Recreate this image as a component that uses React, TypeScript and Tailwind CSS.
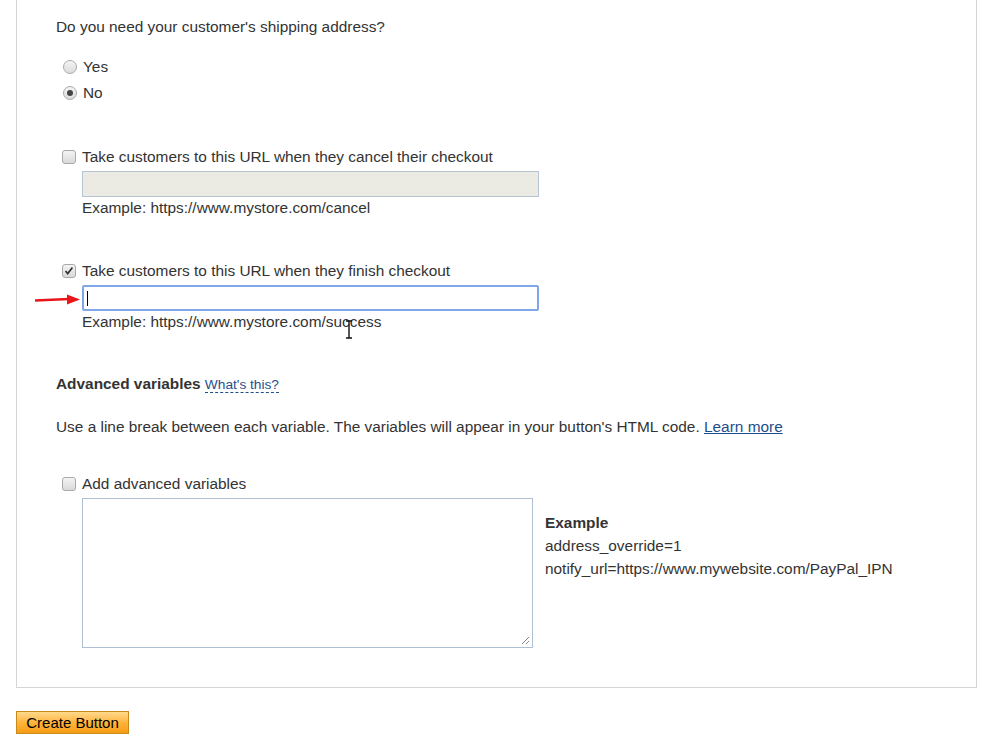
const font = { fontFamily: '"Liberation Sans", Arial, sans-serif' };

const Check = ({ checked }: { checked?: boolean }) => (
  <span className="relative inline-block w-[14px] h-[14px] rounded-[3px] border border-[#a9a9a9] bg-gradient-to-b from-[#f4f4f4] to-[#d9d9d9] mr-[6px] shrink-0">
    {checked && (
      <svg viewBox="0 0 14 14" className="absolute inset-0 w-[12px] h-[12px]">
        <path d="M3 7 L5.5 10 L11 3" fill="none" stroke="#333" strokeWidth="2" />
      </svg>
    )}
  </span>
);

const Radio = ({ checked }: { checked?: boolean }) => (
  <span className="relative inline-flex items-center justify-center w-[14px] h-[14px] rounded-full border border-[#a9a9a9] bg-gradient-to-b from-[#f4f4f4] to-[#dcdcdc] mr-[6px] shrink-0">
    {checked && <span className="w-[6px] h-[6px] rounded-full bg-[#444]" />}
  </span>
);

const Row = ({ children, className = '' }: { children: React.ReactNode; className?: string }) => (
  <div className={`flex items-center h-[20px] ${className}`}>{children}</div>
);

export default function App() {
  return (
    <div className="min-h-screen bg-white text-[15.4px] text-[#333] pl-4" style={font}>
      <div className="w-[961px] border-l border-r border-b border-[#d4d4d4] pl-[39px] pt-[17px] pb-[39px]">
        <div className="h-[20px] leading-[20px]">Do you need your customer's shipping address?</div>

        <Row className="mt-[20px] pl-[7px]"><Radio />Yes</Row>
        <Row className="mt-[6px] pl-[7px]"><Radio checked />No</Row>

        <Row className="mt-[44px] pl-[6px]"><Check />Take customers to this URL when they cancel their checkout</Row>
        <div className="ml-[26px] mt-[4px] w-[457px] h-[26px] border border-[#b5c4d6] bg-[#ebebe4]" />
        <div className="ml-[26px] mt-[1px] h-[20px] leading-[20px]">Example: https://www.mystore.com/cancel</div>

        <Row className="mt-[43px] pl-[6px]"><Check checked />Take customers to this URL when they finish checkout</Row>
        <div className="relative">
          <div className="ml-[26px] mt-[4px] w-[457px] h-[26px] border-2 border-[#7fa6e6] rounded-[2px] bg-white flex items-center pl-[3px]">
            <span className="w-[1px] h-[15px] bg-black" />
          </div>
          <svg className="absolute left-[-21px] top-[9px]" width="46" height="12" viewBox="0 0 46 12">
            <path d="M0 6.5 L34 5" stroke="#e8161b" strokeWidth="2.5" fill="none" />
            <path d="M32 0.5 L45 5.5 L32 10.5 Z" fill="#e8161b" />
          </svg>
        </div>
        <div className="relative ml-[26px] mt-[1px] h-[20px] leading-[20px]">
          Example: https://www.mystore.com/success
          <svg className="absolute left-[263px] top-[8px]" width="8" height="19" viewBox="0 0 8 19">
            <path d="M1 1 H7 M4 1 V18 M1 18 H7" stroke="#111" strokeWidth="1.4" fill="none" />
          </svg>
        </div>

        <div className="mt-[42px] h-[20px] leading-[20px]">
          <span className="font-bold">Advanced variables</span>{' '}
          <span className="text-[13.7px] text-[#1f4e8c] border-b border-dashed border-[#1f4e8c]">What's this?</span>
        </div>

        <div className="mt-[23px] h-[20px] leading-[20px]">
          Use a line break between each variable. The variables will appear in your button's HTML code.{' '}
          <span className="text-[#1f4e8c] underline">Learn more</span>
        </div>

        <Row className="mt-[37px] pl-[6px]"><Check />Add advanced variables</Row>
        <div className="flex mt-[4px] ml-[26px]">
          <div className="relative w-[451px] h-[150px] border border-[#aebfd3] bg-white">
            <svg className="absolute right-[2px] bottom-[2px]" width="9" height="9" viewBox="0 0 9 9">
              <path d="M8 1 L1 8 M8 5 L5 8" stroke="#888" strokeWidth="1" />
            </svg>
          </div>
          <div className="ml-[12px] pt-[13px] leading-[23px]">
            <div className="font-bold">Example</div>
            <div>address_override=1</div>
            <div>notify_url=https://www.mywebsite.com/PayPal_IPN</div>
          </div>
        </div>
      </div>

      <button className="mt-[23px] w-[113px] h-[23px] border border-[#c98a1c] bg-gradient-to-b from-[#ffd98a] via-[#ffb43a] to-[#f79c12] text-[15px] text-black leading-none" style={font}>
        Create Button
      </button>
    </div>
  );
}
